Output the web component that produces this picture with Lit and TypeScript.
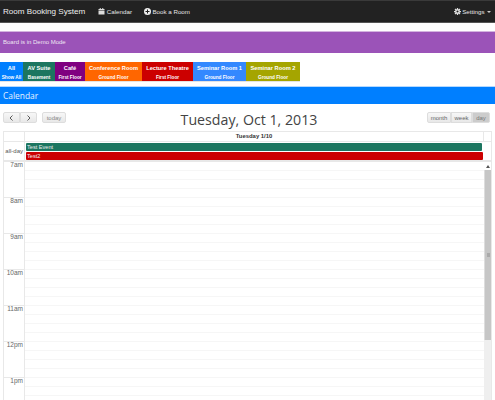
import { LitElement, html, css } from "lit";
import { customElement } from "lit/decorators.js";

const rooms = [
  { n: "All", s: "Show All", c: "#007fff", w: 23 },
  { n: "AV Suite", s: "Basement", c: "#1c7660", w: 32 },
  { n: "Café", s: "First Floor", c: "#800080", w: 30 },
  { n: "Conference Room", s: "Ground Floor", c: "#ff6600", w: 57 },
  { n: "Lecture Theatre", s: "First Floor", c: "#cc0000", w: 51 },
  { n: "Seminar Room 1", s: "Ground Floor", c: "#3388ff", w: 53 },
  { n: "Seminar Room 2", s: "Ground Floor", c: "#a5a500", w: 54 },
];
const hours = ["7am", "8am", "9am", "10am", "11am", "12pm", "1pm"];

@customElement("app-root")
export class AppRoot extends LitElement {
  static styles = css`
    :host { display: block; width: 495px; height: 400px; overflow: hidden; background: #fff; font-family: "Liberation Sans", Arial, sans-serif; color: #333; }
    .nav { height: 23px; background: #222; border-top: 1px solid #3a3a3a; border-bottom: 1px solid #555; box-sizing: border-box; display: flex; align-items: center; color: #e6e6e6; font-size: 6.2px; padding: 0 3px; }
    .brand { font-size: 8.1px; color: #eee; margin-right: 13px; }
    .nav-item { display: flex; align-items: center; gap: 1.5px; margin-right: 12px; }
    .spacer { flex: 1; }
    .caret { width: 0; height: 0; border: 2px solid transparent; border-top-color: #ccc; border-bottom: 0; margin-left: 1px; }
    .settings { display: flex; align-items: center; gap: 1.5px; padding-right: 1px; }
    .alert { margin-top: 8px; height: 22px; box-sizing: border-box; background: #9b53b8; border-top: 1px solid #d3b4df; color: #eee3f2; font-size: 6px; display: flex; align-items: center; padding: 0 0 1px 3px; }
    .tabs { display: flex; margin-top: 9px; height: 20px; }
    .tab { height: 19px; border-bottom: 1px solid #e4e4e4; color: #fff; text-align: center; display: flex; flex-direction: column; align-items: center; white-space: nowrap; }
    .tab b { font-size: 5.7px; line-height: 7px; margin-top: 3px; }
    .tab span { font-size: 4.7px; font-weight: bold; line-height: 6px; margin-top: 2.5px; }
    .panel { margin-top: 4px; height: 18px; box-sizing: border-box; background: #007fff; border-top: 1px solid #b5d9ff; color: #e8f3ff; font-family: "Open Sans", sans-serif; font-size: 8.4px; display: flex; align-items: center; padding-left: 3px; }
    .toolbar { display: flex; align-items: flex-start; height: 27px; padding: 8px 5px 0 3px; box-sizing: border-box; }
    .group { display: flex; }
    .btn { height: 11px; box-sizing: border-box; background: linear-gradient(#f7f7f7, #e8e8e8); border: 1px solid #ddd; color: #666; font-size: 6px; display: flex; align-items: center; justify-content: center; }
    .group .btn:first-child { border-radius: 2px 0 0 2px; }
    .group .btn:last-child { border-radius: 0 2px 2px 0; }
    .btn.arrow { width: 17px; color: #333; }
    .btn.today { width: 24px; margin-left: 5px; color: #888; border-radius: 2px; }
    .btn.month { width: 24px; }
    .btn.week { width: 21px; }
    .btn.day { width: 18px; background: #ccc; color: #777; }
    .title { flex: 1; text-align: center; font-family: "Open Sans", sans-serif; font-size: 14.2px; line-height: 18px; color: #444; margin-top: -1px; padding-left: 5px; white-space: nowrap; }
    .cal { margin: 0 3px; border: 1px solid #e8e8e8; border-bottom: 0; height: 269px; box-sizing: border-box; width: 489px; overflow: hidden; }
    .head { display: grid; grid-template-columns: 21px 1fr 7px; height: 9px; border-bottom: 1px solid #e8e8e8; font-size: 5.9px; font-weight: bold; text-align: center; line-height: 9px; color: #333; }
    .head > div { border-right: 1px solid #e8e8e8; }
    .head > div:last-child { border-right: 0; }
    .allday { display: grid; grid-template-columns: 21px 1fr; height: 18px; border-bottom: 2px solid #e8e8e8; }
    .allday .lbl { border-right: 1px solid #e8e8e8; font-size: 6px; color: #555; display: flex; align-items: center; justify-content: flex-end; padding-right: 1px; white-space: nowrap; }
    .events { padding: 1px 8px 0 1px; display: flex; flex-direction: column; gap: 1px; }
    .ev { height: 8px; color: #eee; font-size: 5.6px; line-height: 8px; padding-left: 1px; border-radius: 1px; }
    .ev.a { background: #1c7660; margin-right: 1px; }
    .ev.b { background: #cc0000; }
    .scroll { display: grid; grid-template-columns: 1fr 7px; }
    .times { overflow: hidden; height: 240px; }
    .hour { height: 36px; display: grid; grid-template-columns: 21px 1fr; box-sizing: border-box; border-top: 1px solid #e8e8e8; }
    .hour:first-child { border-top: 0; height: 35px; }
    .hl { border-right: 1px solid #e8e8e8; font-size: 6.5px; color: #666; text-align: right; padding: 0 1px 0 0; line-height: 6px; }
    .slots { display: flex; flex-direction: column; }
    .slot { height: 9px; box-sizing: border-box; border-bottom: 1px solid #f6f6f6; }
    .sb { background: #efefef; height: 240px; display: flex; flex-direction: column; }
    .sb-up { height: 8px; background: #fff; display: flex; align-items: center; justify-content: center; }
    .sb-thumb { height: 170px; background: #c6c6c6; display: flex; align-items: center; justify-content: center; border-left: 1px solid #ddd; box-sizing: border-box; }
    .grip { width: 3px; height: 4px; background: #aaa; }
  `;

  private calIcon() {
    return html`<svg width="7" height="7" viewBox="0 0 14 14"><path fill="#ddd" d="M1 5h12v8H1zM1 2h12v2H1zM3.500 0h2v3h-2zM8.500 0h2v3h-2z"/></svg>`;
  }
  private plusIcon() {
    return html`<svg width="7" height="7" viewBox="0 0 14 14"><circle cx="7" cy="7" r="7" fill="#eee"/><path fill="#222" d="M6 3h2v3h3v2H8v3H6V8H3V6h3z"/></svg>`;
  }
  private gearIcon() {
    return html`<svg width="7" height="7" viewBox="0 0 14 14"><path fill="none" stroke="#ddd" stroke-width="3" d="M7 3.500a3.500 3.500 0 1 0 .01 0z"/><path stroke="#ddd" stroke-width="2.500" d="M7 0v3M7 11v3M0 7h3M11 7h3M2 2l2 2M10 10l2 2M2 12l2-2M10 4l2-2"/></svg>`;
  }

  render() {
    return html`
      <div class="nav">
        <span class="brand">Room Booking System</span>
        <span class="nav-item">${this.calIcon()}Calendar</span>
        <span class="nav-item">${this.plusIcon()}Book a Room</span>
        <span class="spacer"></span>
        <span class="settings">${this.gearIcon()}Settings<span class="caret"></span></span>
      </div>
      <div class="alert">Board is in Demo Mode</div>
      <div class="tabs">
        ${rooms.map((r) => html`<div class="tab" style="background:${r.c};width:${r.w}px"><b>${r.n}</b><span>${r.s}</span></div>`)}
      </div>
      <div class="panel">Calendar</div>
      <div class="toolbar">
        <div class="group">
          <div class="btn arrow"><svg width="5" height="6" viewBox="0 0 5 6"><path d="M3.500 .5L1 3l2.500 2.500" fill="none" stroke="#333" stroke-width=".8"/></svg></div>
          <div class="btn arrow"><svg width="5" height="6" viewBox="0 0 5 6"><path d="M1.500 .5L4 3 1.500 5.500" fill="none" stroke="#333" stroke-width=".8"/></svg></div>
        </div>
        <div class="btn today">today</div>
        <div class="title">Tuesday, Oct 1, 2013</div>
        <div class="group">
          <div class="btn month">month</div><div class="btn week">week</div><div class="btn day">day</div>
        </div>
      </div>
      <div class="cal">
        <div class="head"><div></div><div>Tuesday 1/10</div><div></div></div>
        <div class="allday">
          <div class="lbl">all-day</div>
          <div class="events"><div class="ev a">Test Event</div><div class="ev b">Test2</div></div>
        </div>
        <div class="scroll">
          <div class="times">
            ${hours.map((h) => html`<div class="hour"><div class="hl">${h}</div><div class="slots"><div class="slot"></div><div class="slot"></div><div class="slot"></div><div class="slot"></div></div></div>`)}
          </div>
          <div class="sb">
            <div class="sb-up"><svg width="4" height="3" viewBox="0 0 4 3"><path d="M2 0l2 3H0z" fill="#555"/></svg></div>
            <div class="sb-thumb"><div class="grip"></div></div>
          </div>
        </div>
      </div>
    `;
  }
}
